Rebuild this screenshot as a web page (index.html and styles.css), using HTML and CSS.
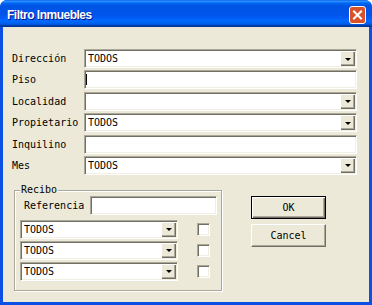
FILE: index.html
```html
<html>
<head><title>Filtro Inmuebles</title>
<link rel="stylesheet" href="styles.css">
</head>
<body>

<div class="window">
  <div class="titlebar">
    <span class="title">Filtro Inmuebles</span>
    <span class="close">
      <svg width="17" height="18" viewBox="0 0 17 18">
        <rect x="0.5" y="0.5" width="16" height="17" rx="2.5" fill="#d9502a" stroke="#fff"/>
        <path d="M5 5.5 L12 12.5 M12 5.5 L5 12.5" stroke="#fff" stroke-width="2" stroke-linecap="square"/>
      </svg>
    </span>
  </div>

  <div class="client">
    <div class="form">
      <span class="lbl">Dirección</span>
      <div class="combo"><span class="value">TODOS</span><span class="drop"></span></div>

      <span class="lbl">Piso</span>
      <div class="edit"><span class="caret"></span></div>

      <span class="lbl">Localidad</span>
      <div class="combo"><span class="value"></span><span class="drop"></span></div>

      <span class="lbl">Propietario</span>
      <div class="combo"><span class="value">TODOS</span><span class="drop"></span></div>

      <span class="lbl">Inquilino</span>
      <div class="edit"></div>

      <span class="lbl">Mes</span>
      <div class="combo"><span class="value">TODOS</span><span class="drop"></span></div>
    </div>

    <div class="lower">
      <div class="group">
        <span class="legend">Recibo</span>
        <div class="ref-row">
          <span class="ref-lbl">Referencia</span>
          <div class="edit ref"></div>
        </div>
        <div class="rows">
          <div class="combo"><span class="value">TODOS</span><span class="drop"></span></div>
          <span class="check"></span>
          <div class="combo"><span class="value">TODOS</span><span class="drop"></span></div>
          <span class="check"></span>
          <div class="combo"><span class="value">TODOS</span><span class="drop"></span></div>
          <span class="check"></span>
        </div>
      </div>

      <div class="buttons">
        <button class="btn default">OK</button>
        <button class="btn">Cancel</button>
      </div>
    </div>
  </div>
</div>

</body>
</html>
```

FILE: styles.css
```css
body {margin:0; background:#fff;}

.window {width:372px; height:305px; display:flex; flex-direction:column; background:#0b50e2; border-radius:7px 7px 0 0; overflow:hidden; font-family:"DejaVu Sans Mono",monospace; font-size:10px; color:#000;}

.titlebar {height:27px; flex:none; box-sizing:border-box; display:flex; align-items:center; padding:2px 6px 0 7px;
  background:linear-gradient(to bottom,#0058ee 0%,#3593ff 4%,#288eff 6%,#127dff 8%,#036ffc 10%,#0262ee 14%,#0057e5 20%,#0054e3 24%,#0055eb 56%,#005bf5 66%,#026afe 76%,#0062ef 86%,#0052d6 92%,#0040ab 94%,#003092 100%);}
.title {flex:1; color:#fff; font:bold 12px "Liberation Sans",sans-serif; letter-spacing:-0.5px; text-shadow:1px 1px #0f1089;}
.close {display:flex; width:17px; height:18px;}

.client {flex:1; margin:0 3px 3px; background:#ece9d8; padding:22px 12px 0 9px;}

.form {display:grid; grid-template-columns:72px 273px; grid-auto-rows:19px; row-gap:2.4px; align-items:center;}
.lbl {white-space:nowrap;}

.combo {height:19px; box-sizing:border-box; display:flex; align-items:center; padding:1px 1px 1px 3px; background:#fff;
  border:1px solid; border-color:#aca899 #fff #fff #aca899; box-shadow:inset 1px 1px #716f64, inset -1px -1px #f1efe2;}
.value {flex:1; white-space:nowrap;}
.drop {width:15px; height:15px; display:flex; align-items:center; justify-content:center; background:#ece9d8;
  box-shadow:inset 1px 1px #fff, inset -1px -1px #716f64, inset -2px -2px #aca899;}
.drop::after {content:""; width:0; height:0; border-left:3px solid transparent; border-right:3px solid transparent; border-top:3px solid #000; margin-top:1px;}

.edit {height:19px; box-sizing:border-box; display:flex; align-items:center; padding:0 1px; background:#fff;
  border:1px solid; border-color:#aca899 #fff #fff #aca899; box-shadow:inset 1px 1px #716f64, inset -1px -1px #f1efe2;}
.caret {width:1px; height:11px; background:#000;}

.lower {display:flex; align-items:flex-start; margin:15px 0 0 2px;}

.group {position:relative; width:208px; height:101px; box-sizing:border-box; padding:5px 4px 0 5px;
  border:1px solid #aca899; box-shadow:inset 1px 1px #fff, 1px 1px #fff;}
.legend {position:absolute; top:-7px; left:5px; padding:0 1px; line-height:12px; background:#ece9d8;}

.ref-row {display:flex; align-items:center; height:19px;}
.ref-lbl {width:66px; margin-left:4px;}
.edit.ref {width:127px;}

.rows {margin-top:5px; display:grid; grid-template-columns:158px 13px; column-gap:19px; grid-auto-rows:19px; row-gap:2px; align-items:center;}

.check {width:13px; height:13px; box-sizing:border-box; background:#fff;
  border:1px solid; border-color:#aca899 #fff #fff #aca899; box-shadow:inset 1px 1px #716f64, inset -1px -1px #f1efe2;}

.buttons {display:flex; flex-direction:column; gap:5px; margin:6px 0 0 29px;}
.btn {width:75px; height:23px; padding:0; font-family:"DejaVu Sans Mono",monospace; font-size:10px; color:#000; background:#ece9d8;
  border:1px solid; border-color:#fff #716f64 #716f64 #fff; box-shadow:inset -1px -1px #aca899;}
.btn.default {border-color:#000; box-shadow:inset 1px 1px #fff, inset -1px -1px #716f64, inset -2px -2px #aca899;}
```
